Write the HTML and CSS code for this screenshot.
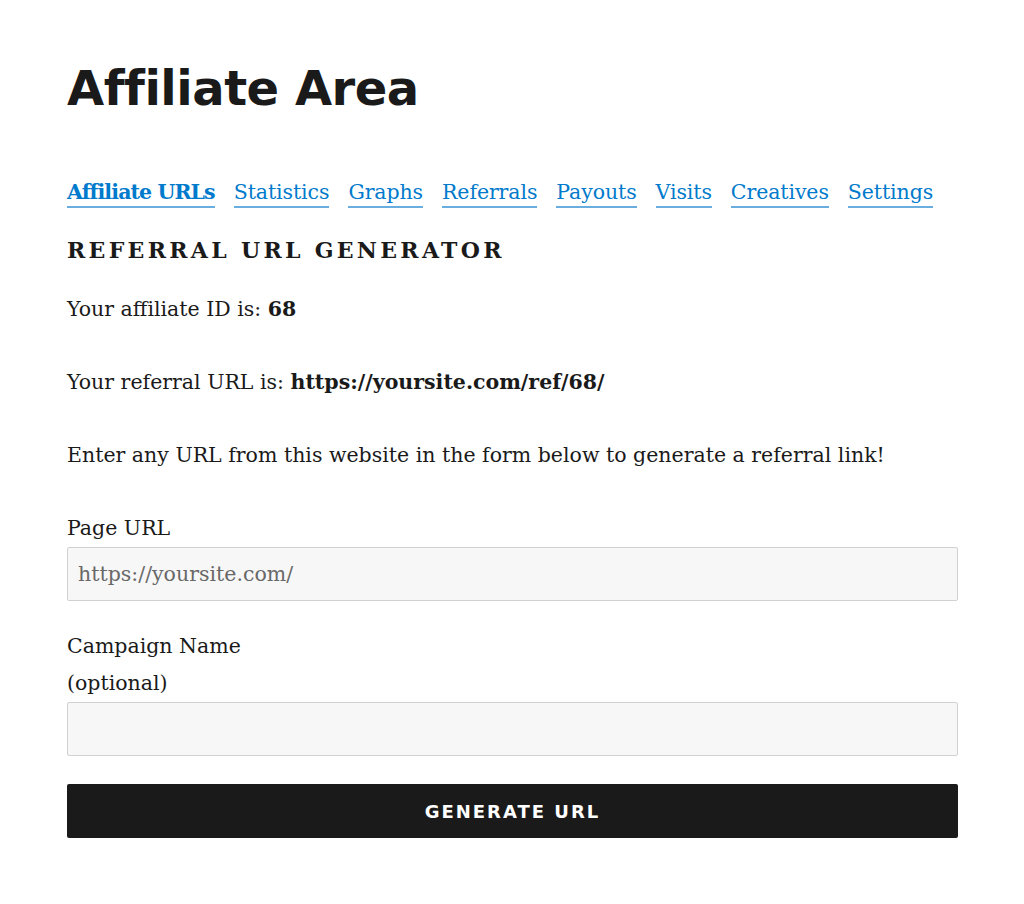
FILE: index.html
```html
<!DOCTYPE html>
<html lang="en">
<head>
<meta charset="utf-8">
<title>Affiliate Area</title>
<link rel="stylesheet" href="styles.css">
</head>
<body>
<main class="page">
  <h1 class="page-title">Affiliate Area</h1>
  <nav class="tabs">
    <a class="tab active" href="#">Affiliate URLs</a>
    <a class="tab" href="#">Statistics</a>
    <a class="tab" href="#">Graphs</a>
    <a class="tab" href="#">Referrals</a>
    <a class="tab" href="#">Payouts</a>
    <a class="tab" href="#">Visits</a>
    <a class="tab" href="#">Creatives</a>
    <a class="tab" href="#">Settings</a>
  </nav>
  <h4 class="section-title">Referral URL Generator</h4>
  <p class="para">Your affiliate ID is: <strong>68</strong></p>
  <p class="para">Your referral URL is: <strong>https://yoursite.com/ref/68/</strong></p>
  <p class="para">Enter any URL from this website in the form below to generate a referral link!</p>
  <form class="gen-form">
    <div class="field">
      <label class="label" for="url">Page URL</label>
      <input class="input" id="url" type="text" value="https://yoursite.com/">
    </div>
    <div class="field">
      <label class="label" for="camp">Campaign Name<br>(optional)</label>
      <input class="input" id="camp" type="text">
    </div>
    <button class="btn" type="button">Generate URL</button>
  </form>
</main>
</body>
</html>
```
FILE: styles.css
```css
html, body {
  margin: 0;
  padding: 0;
  background: #ffffff;
}
body {
  font-family: "DejaVu Serif", "Liberation Serif", serif;
  color: #1a1a1a;
  font-size: 20.5px;
  line-height: 37px;
}
.page {
  width: 891px;
  margin: 0 0 0 67px;
  padding-top: 56px;
  display: flex;
  flex-direction: column;
}
.page-title {
  font-family: "DejaVu Sans", "Liberation Sans", sans-serif;
  font-weight: 700;
  font-size: 48px;
  line-height: 65px;
  margin: 0 0 57px;
  letter-spacing: -0.5px;
}
.tabs {
  display: flex;
  gap: 19px;
  line-height: 28px;
  margin-bottom: 24px;
}
.tab {
  color: #007acc;
  text-decoration: none;
  border-bottom: 2px solid #6aaee0;
  font-size: 20.5px;
  letter-spacing: -0.1px;
}
.tab.active {
  font-weight: 700;
  letter-spacing: -0.9px;
}
.section-title {
  font-family: "DejaVu Serif", serif;
  font-weight: 700;
  text-transform: uppercase;
  letter-spacing: 3.3px;
  font-size: 22px;
  line-height: 37px;
  margin: 0 0 22px;
}
.para {
  margin: 0 0 36px;
}
.gen-form {
  display: flex;
  flex-direction: column;
}
.field {
  display: flex;
  flex-direction: column;
  margin-bottom: 27px;
}
.label {
  display: block;
}
.input {
  box-sizing: border-box;
  height: 54px;
  width: 100%;
  background: #f7f7f7;
  border: 1px solid #d1d1d1;
  border-radius: 2px;
  padding: 0 10px;
  font-family: "DejaVu Serif", serif;
  font-size: 20.5px;
  color: #686868;
  margin: 0;
}
.btn {
  height: 54px;
  background: #1a1a1a;
  color: #ffffff;
  border: 0;
  border-radius: 2px;
  font-family: "DejaVu Sans", sans-serif;
  font-weight: 700;
  font-size: 18px;
  letter-spacing: 2px;
  text-transform: uppercase;
  margin-top: 1px;
}
```
